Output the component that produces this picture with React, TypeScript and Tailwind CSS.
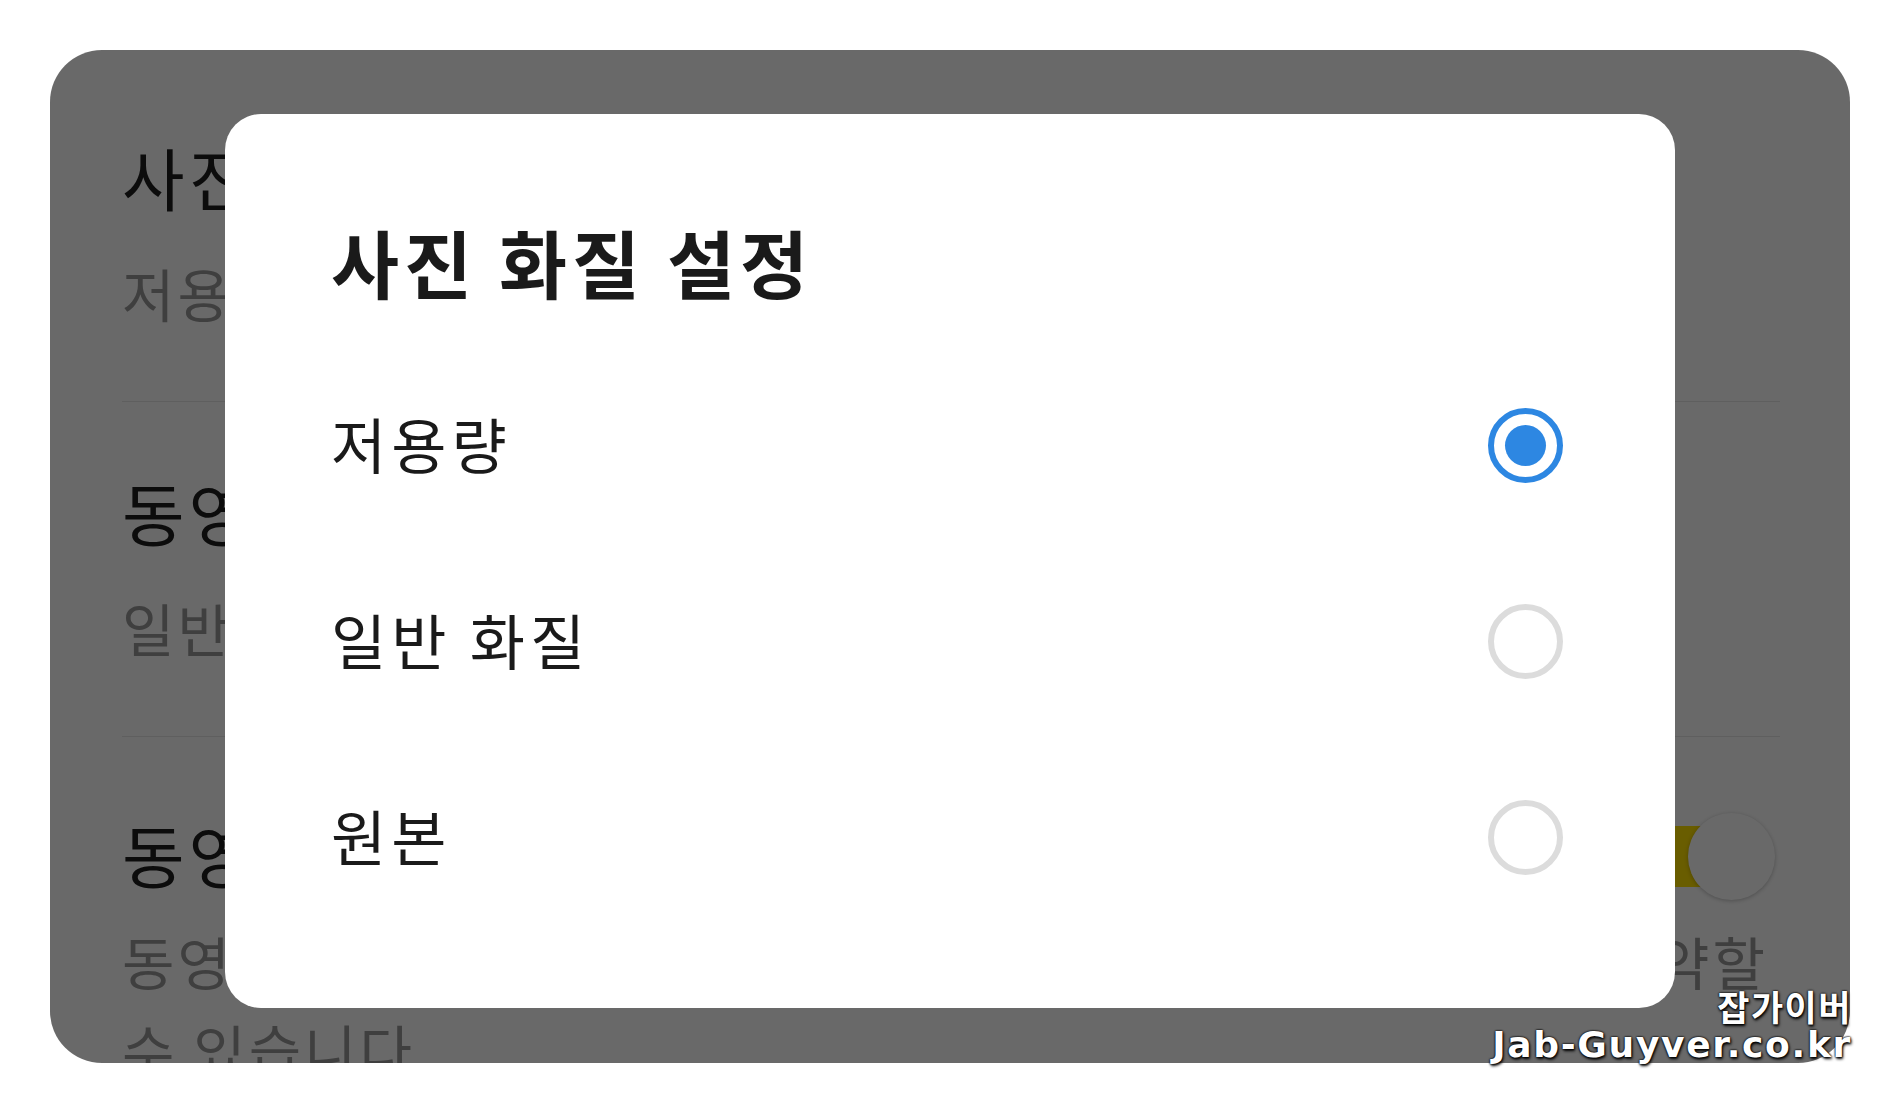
import React from 'react';

const options = ['저용량', '일반 화질', '원본'];

function Radio({ checked }: { checked: boolean }) {
  if (checked) {
    return (
      <div className="w-[75px] h-[75px] rounded-full border-[6px] border-[#2d87e2] flex items-center justify-center">
        <div className="w-[41px] h-[41px] rounded-full bg-[#2d87e2]" />
      </div>
    );
  }
  return <div className="w-[75px] h-[75px] rounded-full border-[6px] border-[#dcdcdc]" />;
}

function SettingRow({
  title,
  sub,
  last,
  children,
}: {
  title: string;
  sub: React.ReactNode;
  last?: boolean;
  children?: React.ReactNode;
}) {
  return (
    <div className={last ? 'pt-[71px]' : 'pt-[70px] pb-[69px] border-b border-[#e6e6e6]'}>
      <div className="flex items-center justify-between">
        <div className="text-[68px] leading-[80px] tracking-[4px] text-[#1e1e1e] whitespace-nowrap">{title}</div>
        {children}
      </div>
      <div className="mt-[35px] text-[57px] leading-[80px] tracking-[3px] text-[#9a9a9a]">{sub}</div>
    </div>
  );
}

export default function App() {
  return (
    <div className="relative w-[1900px] h-[1113px] bg-white p-[50px] font-['Noto_Sans_CJK_KR','Noto_Sans',sans-serif]">
      <div className="relative w-full h-full rounded-[52px] overflow-hidden bg-white">
        {/* settings screen underneath */}
        <div className="pt-[17px] pl-[72px] pr-[70px]">
          <SettingRow title="사진 화질" sub="저용량" />
          <SettingRow title="동영상 화질" sub="일반 화질" />
          <SettingRow
            title="동영상 원본 전송"
            last
            sub={
              <div className="-mt-[19px] leading-[88px]">
                <div className="mr-[12px] whitespace-nowrap overflow-hidden [text-align-last:justify]">
                  동영상을 원본으로 보내면 데이터 사용량이 많아지고 속도가 약할
                </div>
                <div>수 있습니다</div>
              </div>
            }
          >
            <div className="relative w-[170px] h-[87px] mr-[5px] mt-[5px] flex items-center">
              <div className="w-[140px] h-[61px] rounded-full bg-[#ffe100]" />
              <div className="absolute right-0 top-0 w-[87px] h-[87px] rounded-full bg-white shadow-[0_1px_4px_rgba(0,0,0,0.25)]" />
            </div>
          </SettingRow>
        </div>

        {/* dim + dialog */}
        <div className="absolute inset-0 bg-black/[0.59] flex justify-center pt-[64px]">
          <div className="w-[1450px] h-[894px] bg-white rounded-[36px] pt-[97px] pl-[106px] pr-[112px]">
            <div className="text-[74px] leading-[100px] font-bold text-[#1a1a1a] tracking-[5px]">사진 화질 설정</div>
            <div className="mt-[36px]">
              {options.map((o, i) => (
                <div key={o} className="h-[196px] flex items-center justify-between">
                  <span className="text-[60px] leading-[80px] tracking-[5px] text-[#1a1a1a] -mt-[5px]">{o}</span>
                  <Radio checked={i === 0} />
                </div>
              ))}
            </div>
          </div>
        </div>
      </div>

      {/* watermark */}
      <div className="absolute right-[48px] bottom-[50px] text-right text-white font-bold leading-none [text-shadow:0_0_2px_#000,0_0_2px_#000,1px_2px_3px_#000]">
        <div className="text-[35px] tracking-[1.5px] mb-[4px]">잡가이버</div>
        <div className="text-[36px] tracking-[1.7px] font-['DejaVu_Sans',sans-serif]">Jab-Guyver.co.kr</div>
      </div>
    </div>
  );
}
